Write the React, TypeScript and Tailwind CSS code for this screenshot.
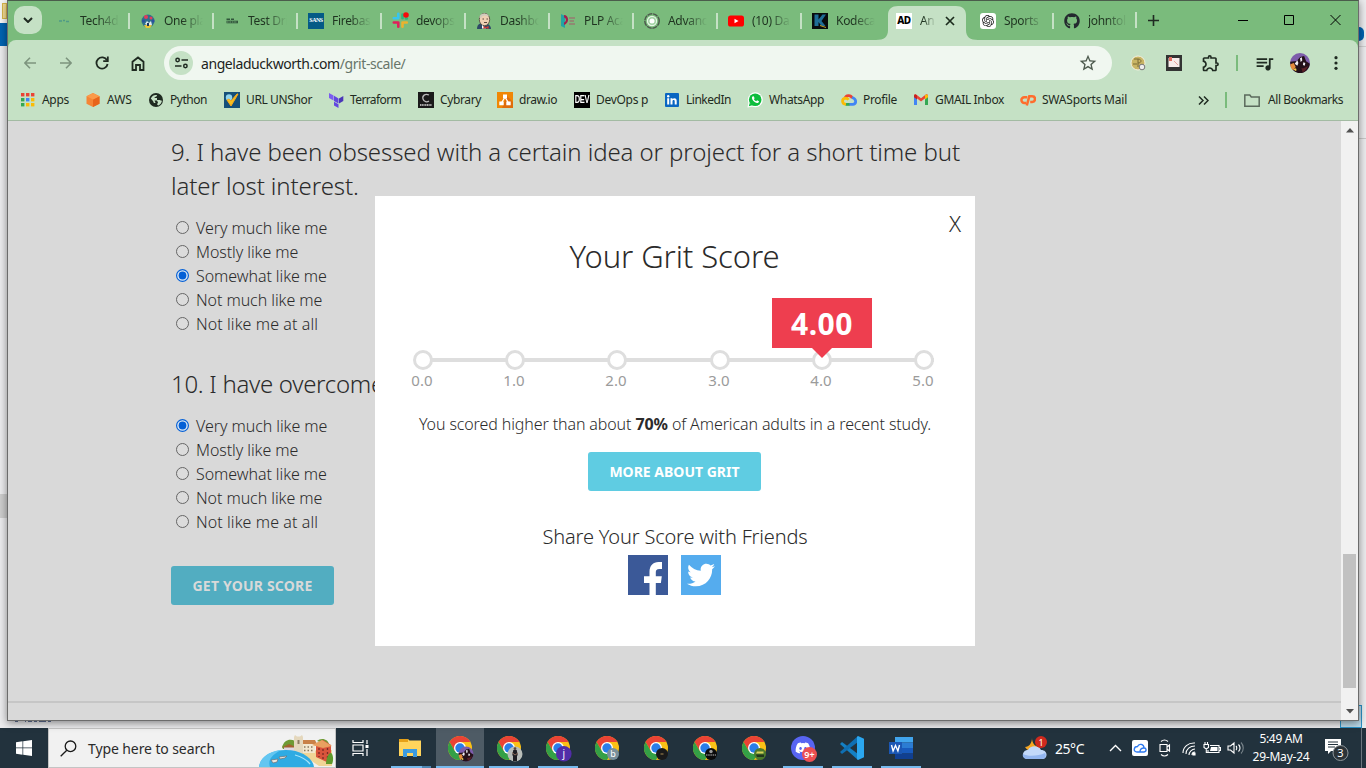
import type { ReactNode } from "react";
import { FaGithub, FaTwitter, FaDiscord } from "react-icons/fa";
import { SiOpenai } from "react-icons/si";
import { MdOutlineExtension, MdQueueMusic, MdStarBorder } from "react-icons/md";

/* ---------- favicons ---------- */

const Fav = {
  tech: (
    <svg width="16" height="16" viewBox="0 0 16 16"><path d="M3 8h3M7 7.500h2M10 8.500h3" stroke="#4f9a86" strokeWidth="1.300" /></svg>
  ),
  one: (
    <svg width="16" height="16" viewBox="0 0 16 16">
      <circle cx="8" cy="8" r="6.500" fill="#2f6f8c" />
      <circle cx="6" cy="4" r="2" fill="#e23b5a" /><circle cx="11" cy="5" r="1.500" fill="#e23b5a" />
      <circle cx="3.500" cy="8" r="1.500" fill="#2c4ea0" /><circle cx="13" cy="8" r="1.500" fill="#2c4ea0" />
      <path d="M5 11l2-3 2 2 2-2 1 4-3 1z" fill="#dfe9ef" /><path d="M4 12h8l-2 3H6z" fill="#e9c53a" /><path d="M7 10h2v3H7z" fill="#1c3560" />
    </svg>
  ),
  test: (
    <svg width="16" height="16" viewBox="0 0 16 16"><path d="M2.500 6.300h3.500M7 6.300h3" stroke="#30563a" strokeWidth="1.600" /><path d="M2.500 9h11.500" stroke="#30563a" strokeWidth="2.600" /><path d="M3 9h10" stroke="#8dc38f" strokeWidth=".7" strokeDasharray="1.600 .8" /></svg>
  ),
  sans: (
    <span className="flex size-4 items-center justify-center bg-[#045a86] font-['Liberation_Serif',serif] text-[6px] font-bold tracking-[-0.5px] text-white">SANS</span>
  ),
  slack: (
    <svg className="shrink-0" width="17" height="17" viewBox="0 0 17 17">
      <g strokeWidth="2.600" strokeLinecap="round">
        <path d="M6.300 1.800v4.500M1.800 6.300h4.500" stroke="#36c5f0" /><path d="M10.500 2.500v3.800" stroke="#2eb67d" /><path d="M14 6.500h.8" stroke="#2eb67d" />
        <path d="M10.500 10.500h4.300M10.500 10.500v4.300" stroke="#ecb22e" /><path d="M1.800 10.500h4.500M6.300 10.500v4.300" stroke="#e01e5a" />
      </g>
      <circle cx="14" cy="3" r="2.800" fill="#f60b0b" />
    </svg>
  ),
  jenkins: (
    <svg width="16" height="16" viewBox="0 0 16 16">
      <path d="M1 16c0-3 1-5 4-6l7 1c2 1 3 3 3 5z" fill="#2e4a66" />
      <ellipse cx="8.500" cy="6.500" rx="5.200" ry="6.200" fill="#efd0b4" stroke="#4c4339" strokeWidth=".8" />
      <path d="M3.500 5C3 0 11 -1 13 3l-1.500.5C9 2 7 2 5 5z" fill="#d0cbbd" />
      <path d="M6.500 6H8M10.500 6H12M8 9.500h3" stroke="#4c3a30" strokeWidth=".9" /><path d="M6 12l4 3.500h-4z" fill="#fff" /><path d="M7.500 13l2.500 1.200 2.500-1.500v3.300l-2.500-1-2.500 1z" fill="#d33833" />
    </svg>
  ),
  plp: (
    <svg width="16" height="16" viewBox="0 0 16 16">
      <path d="M1 1l4 2v12l-4-2z" fill="#22a4a4" /><path d="M4 2c5 0 6 8 0 10v-2.500c3-1 2-5 0-5z" fill="#a3204f" />
      <path d="M9 5h6M9.500 8h4.500M9 11h6" stroke="#a35a6a" strokeWidth="1.200" />
    </svg>
  ),
  adv: (
    <svg width="16" height="16" viewBox="0 0 16 16">
      <circle cx="8" cy="8" r="7.200" fill="none" stroke="#4d5a4d" strokeWidth="1.500" strokeDasharray="5 .8" />
      <circle cx="8" cy="8" r="4.600" fill="#9fd0a0" stroke="#e6f6e6" strokeWidth="1.200" /><circle cx="8" cy="8" r="2.500" fill="#fff" />
    </svg>
  ),
  yt: (
    <svg width="16" height="16" viewBox="0 0 16 16"><rect y="2.500" width="16" height="11" rx="2.600" fill="#f00" /><path d="M6.500 5.700v4.600l4-2.300z" fill="#fff" /></svg>
  ),
  kode: (
    <svg width="16" height="16" viewBox="0 0 16 16"><path d="M0 0h16v16H0z" fill="#080b0d" /><path d="M2.500 1.500h4v5l4-5H14L9.500 8l4 5H9.500l-3-4v4h-4z" fill="#1f6d96" /><path d="M8 12.500l6 2" stroke="#c59a22" /></svg>
  ),
  ad: <span className="flex size-4 items-center justify-center bg-white text-[10px] font-extrabold tracking-[-0.4px] text-black">AD</span>,
  gpt: <span className="flex size-4 items-center justify-center rounded-[3px] bg-white"><SiOpenai size={12} color="#222" /></span>,
  git: <FaGithub size={16} color="#24292f" />,
};

const tabs: { icon: ReactNode; text: string; sep: boolean; active?: boolean }[] = [
  { icon: Fav.tech, text: "Tech4d", sep: false },
  { icon: Fav.one, text: "One pla", sep: true },
  { icon: Fav.test, text: "Test Dri", sep: true },
  { icon: Fav.sans, text: "Firebas", sep: true },
  { icon: Fav.slack, text: "devops-", sep: true },
  { icon: Fav.jenkins, text: "Dashbo", sep: true },
  { icon: Fav.plp, text: "PLP Aca", sep: true },
  { icon: Fav.adv, text: "Advanc", sep: true },
  { icon: Fav.yt, text: "(10) Da", sep: true },
  { icon: Fav.kode, text: "Kodeca", sep: true },
  { icon: Fav.ad, text: "An", sep: false, active: true },
  { icon: Fav.gpt, text: "Sports", sep: false },
  { icon: Fav.git, text: "johntol", sep: true },
];

function Tab({ icon, text, sep, active }: (typeof tabs)[number]) {
  return (
    <div className="relative flex w-[84px] shrink-0 items-center">
      {active && (
        <svg className="absolute -left-2 -top-[1px] z-0" width="102" height="35" viewBox="0 0 102 35">
          <path d="M0 35c8 0 12-3 12-10V10C12 4 16 1 22 1h58c6 0 10 3 10 9v15c0 7 4 10 12 10z" fill="#c5e1c5" />
        </svg>
      )}
      <i className={`z-10 h-4 w-[2px] ${sep ? "bg-[#c5e1c5]" : ""}`} />
      <span className="z-10 ml-[10px] flex w-4 shrink-0 items-center justify-center">{icon}</span>
      <span className={`z-10 ml-2 whitespace-nowrap text-[12px] tracking-[-0.3px] text-[#1f3320] ${active ? "w-[16px] [mask-image:linear-gradient(to_right,#000_20%,transparent)]" : "w-[47px] [mask-image:linear-gradient(to_right,#000_18px,transparent_39px)]"}`}>{text}</span>
      {active && (
        <svg className="z-10 ml-[9px]" width="10" height="10" viewBox="0 0 10 10"><path d="M1 1l8 8M9 1L1 9" stroke="#1c2b1d" strokeWidth="1.700" /></svg>
      )}
    </div>
  );
}

/* ---------- bookmarks ---------- */

const appColors = ["#ea4335", "#ea4335", "#ea4335", "#34a853", "#4285f4", "#fbbc05", "#34a853", "#fbbc05", "#fbbc05"];

const Bm = {
  apps: (
    <svg width="16" height="16" viewBox="0 0 16 16">{appColors.map((c, i) => <rect key={i} x={1 + (i % 3) * 5} y={1 + Math.floor(i / 3) * 5} width="3.400" height="3.400" fill={c} />)}</svg>
  ),
  aws: (
    <svg width="16" height="16" viewBox="0 0 16 16"><path d="M8 1l6.500 3.200v7.600L8 15l-6.500-3.200V4.200z" fill="#f58536" /><path d="M8 7.500l6.500-3.300v7.600L8 15z" fill="#e8641b" /><path d="M8 1l6.500 3.200L8 7.500 1.500 4.200z" fill="#fb9a4a" /></svg>
  ),
  globe: (
    <svg width="16" height="16" viewBox="0 0 16 16"><circle cx="8" cy="8" r="7" fill="#1f2a21" /><path d="M2.800 6.500c1.500-3 4-4 6.200-3.300 0 2-2.500 1.300-2.500 2.800H9v2h3c1 1 2 .5 2 .5-.3 2-1.500 4-3.500 5-1.500-.5-1.500-2-2.500-2.500H6C5 10 5.500 9 4.500 8.500z" fill="#c5e1c5" /><path d="M6.500 8.500H9l1 2-1.500 3z" fill="#1f2a21" /></svg>
  ),
  url: (
    <svg width="16" height="16" viewBox="0 0 16 16"><path d="M0 0h16v16H0z" fill="#15507a" /><circle cx="5" cy="5.500" r="3.200" fill="#8fd4ee" /><path d="M3 8l4 6 7-12-1 0-6 7-2-2z" fill="#f5c021" stroke="#f5a81c" /></svg>
  ),
  terra: (
    <svg width="16" height="16" viewBox="0 0 16 16"><path d="M1 1l4.500 2.600v5L1 6z" fill="#7b5cf0" /><path d="M6 3.800l4.500 2.600v5L6 8.900zM6 9.800l4.500 2.500V16L6 13.500z" fill="#6247e0" /><path d="M11 6.400l4.300-2.500v5L11 11.400z" fill="#4a35b8" /></svg>
  ),
  cyb: (
    <svg width="16" height="16" viewBox="0 0 16 16"><path d="M0 0h16v16H0z" fill="#1a1a1a" /><path d="M11 3C7 1 4 4 5 7s4 3.500 6 2" fill="none" stroke="#bbb" strokeWidth="1.300" /><path d="M2 13h12" stroke="#ddd" strokeWidth="1.500" strokeDasharray="1.200 .5" /></svg>
  ),
  draw: (
    <svg width="16" height="16" viewBox="0 0 16 16"><path d="M0 0h16v16H0z" fill="#f08705" /><path d="M10 4l6 6v6H5z" fill="#df6c0c" /><path d="M8 5l-3.500 6M8 5l3.500 6" stroke="#fff" strokeWidth="1.300" /><path d="M6 2.500h4v3.800H6zM2.300 9.500h4.400v3.800H2.300zM9.300 9.500h4.400v3.800H9.300z" fill="#fff" /></svg>
  ),
  dev: <span className="flex size-4 items-center justify-center bg-black"><span className="scale-y-150 font-['Liberation_Sans',sans-serif] text-[7.500px] font-bold tracking-[-0.3px] text-white">DEV</span></span>,
  li: (
    <svg width="16" height="16" viewBox="0 0 16 16"><rect x="1" y="1" width="14" height="14" rx="1" fill="#0a66c2" /><path d="M3.200 6.300h2v6.200h-2zM6.500 6.300h2v1c1-1.700 4.200-1.500 4.200 1.500v3.700h-2V9.300c0-1.800-2.200-1.700-2.200 0v3.200h-2z" fill="#fff" /><circle cx="4.200" cy="4.200" r="1.200" fill="#fff" /></svg>
  ),
  wa: (
    <svg width="16" height="16" viewBox="0 0 16 16"><circle cx="8.300" cy="7.700" r="7.500" fill="#fff" /><path d="M.5 15.500l1-5 4 4z" fill="#fff" /><circle cx="8.200" cy="7.800" r="6.300" fill="#0dbd3c" /><path d="M1.800 14.200l1-3.500 2.500 2.500z" fill="#0dbd3c" /><path d="M5.500 4.500l1.200-.3.900 2-.7 1c.6 1 1.300 1.600 2.300 2l.9-.9 1.900.9c0 1.500-1.200 1.900-2.200 1.700C7.300 10.400 5 8 4.900 6c0-.7.300-1.200.6-1.500z" fill="#fff" /></svg>
  ),
  cloud: (
    <svg width="16" height="16" viewBox="0 0 16 16" fill="none" strokeWidth="2.800"><path d="M4 6.500C5 3 9.500 2.500 11.300 6" stroke="#ea4335" /><path d="M11 5.500c5 1.500 4.500 6.700.8 6.900H8" stroke="#4285f4" /><path d="M8.500 12.400H4.400" stroke="#34a853" /><path d="M5 12.300c-4.500-.3-4.500-5.800-.5-6.100 1.500 0 2.500.8 3 1.600" stroke="#fbbc05" /></svg>
  ),
  gmail: (
    <svg width="16" height="16" viewBox="0 0 16 16"><path d="M1 4v9h3V6z" fill="#4285f4" /><path d="M12 6v7h3V4z" fill="#34a853" /><path d="M1 4c0-2 1.500-2 2.500-1.300L8 6.200l4.500-3.500C13.500 2 15 2 15 4l-7 5.600z" fill="#ea4335" /><path d="M12 3c1.500-1.200 3-.5 3 1v1.200L12 7.500z" fill="#fbbc05" /><path d="M1 4c0-1.200.8-1.700 1.500-1.600L4 3.500v4L1 5.200z" fill="#c5221f" /></svg>
  ),
  cp: (
    <svg width="16" height="16" viewBox="0 0 16 16" fill="none" stroke="#ff6c2c" strokeWidth="2.500"><path d="M7.300 5.200H4.300a2.900 2.900 0 0 0 0 5.800h1.900" /><path d="M6.800 13.500L9.300 4.300h2.900a2.800 2.800 0 0 1 0 5.600h-2" /></svg>
  ),
};

const bookmarks: [ReactNode, string, string, string][] = [
  [Bm.apps, "Apps", "w-[65px]", "tracking-[-0.3px]"],
  [Bm.aws, "AWS", "w-[63px]", ""],
  [Bm.globe, "Python", "w-[76px]", "tracking-[-0.47px]"],
  [Bm.url, "URL UNShor", "w-[104px]", "tracking-[-0.38px]"],
  [Bm.terra, "Terraform", "w-[90px]", "tracking-[-0.6px]"],
  [Bm.cyb, "Cybrary", "w-[79px]", "tracking-[-0.37px]"],
  [Bm.draw, "draw.io", "w-[77px]", "tracking-[-0.48px]"],
  [Bm.dev, "DevOps p", "w-[90px]", "tracking-[-0.3px]"],
  [Bm.li, "LinkedIn", "w-[83px]", "tracking-[-0.48px]"],
  [Bm.wa, "WhatsApp", "w-[94px]", "tracking-[-0.35px]"],
  [Bm.cloud, "Profile", "w-[72px]", "tracking-[-0.33px]"],
  [Bm.gmail, "GMAIL Inbox", "w-[107px]", "tracking-[-0.36px]"],
  [Bm.cp, "SWASports Mail", "w-[120px]", "tracking-[-0.22px]"],
];

/* ---------- page ---------- */

const answers = ["Very much like me", "Mostly like me", "Somewhat like me", "Not much like me", "Not like me at all"];

function Options({ selected }: { selected: number }) {
  return (
    <div className="flex flex-col">
      {answers.map((a, i) => (
        <div key={a} className="flex h-6 items-center pl-[5px]">
          <svg className="mr-[7px] -mt-[2px]" width="13" height="13" viewBox="0 0 13 13">
            {i === selected ? (
              <><circle cx="6.500" cy="6.500" r="5.900" fill="#e4ecf4" stroke="#0560d6" strokeWidth="1.200" /><circle cx="6.500" cy="6.500" r="3.900" fill="#0560d6" /></>
            ) : (
              <circle cx="6.500" cy="6.500" r="6" fill="#dcdcdc" stroke="#666" />
            )}
          </svg>
          <span className={`text-[16px] font-light text-[#2b2b2b] ${i === 4 ? "tracking-[0.08px]" : "tracking-[-0.07px]"}`}>{a}</span>
        </div>
      ))}
    </div>
  );
}

const ticks = ["0.0", "1.0", "2.0", "3.0", "4.0", "5.0"];
const tickGap = ["", "ml-[72px]", "ml-[82px]", "ml-[83px]", "ml-[82px]", "ml-[82px]"];
const labelGap = ["", "ml-[52px]", "ml-[62px]", "ml-[63px]", "ml-[62px]", "ml-[62px]"];

function Modal() {
  return (
    <div className="absolute left-[367px] top-[75px] flex h-[450px] w-[600px] flex-col items-center bg-white text-[#2b2b2b]">
      <span className="absolute right-[14px] top-[11px] text-[22px] font-light leading-[32px]">X</span>
      <h2 className="mt-[40px] pr-[1px] text-[31px] font-light leading-[40px] tracking-[-0.08px]">Your Grit Score</h2>
      <div className="relative mt-[73px] flex h-[22px] w-full items-center pl-[38px]">
        <div className="absolute left-[48px] top-[9px] h-[4px] w-[511px] bg-[#dedede]" />
        {ticks.map((t, i) => (
          <i key={t} className={`relative size-5 rounded-full border-[3px] border-[#dedede] bg-white ${tickGap[i]}`} />
        ))}
        <div className="absolute left-[397px] top-[-51px] flex flex-col items-center">
          <div className="flex h-[50px] w-[100px] items-center justify-center bg-[#ee3e4f] text-[30px] font-bold tracking-[0.5px] text-white">4.00</div>
          <svg width="20" height="10" viewBox="0 0 20 10"><path d="M0 0h20L10 10z" fill="#ee3e4f" /></svg>
        </div>
      </div>
      <div className="-mt-[1px] flex w-full pl-[27px] text-[15px] leading-[20px] tracking-[0.1px] text-[#9b9b9b]">
        {ticks.map((t, i) => <span key={t} className={`w-10 text-center ${labelGap[i]}`}>{t}</span>)}
      </div>
      <p className="mt-[22px] text-[16px] font-light leading-[24px] tracking-[-0.11px]">You scored higher than about <b className="font-bold">70%</b> of American adults in a recent study.</p>
      <div className="mr-[1px] mt-[16px] flex h-[39px] w-[173px] shrink-0 items-center justify-center rounded-[3px] bg-[#5fcce2] text-[14px] font-bold text-white">MORE ABOUT GRIT</div>
      <p className="mt-[33px] text-[20px] font-light leading-[26px] tracking-[-0.18px]">Share Your Score with Friends</p>
      <div className="mr-[1px] mt-[5px] flex gap-[13px]">
        <svg width="40" height="40" viewBox="0 0 40 40"><path d="M0 0h40v40H0z" fill="#3b5998" /><path d="M21.500 40V28h-5.500v-6.700h5.500v-4.500c0-6 3.500-9.800 9-9.800H34v7h-2.500c-3 0-3.700 1.300-3.700 3.600v3.700h6l-.9 6.700h-5.100v12z" fill="#fff" /></svg>
        <div className="flex size-10 items-center justify-center bg-[#55acee]"><FaTwitter size={28} color="#fff" /></div>
      </div>
    </div>
  );
}

/* ---------- taskbar ---------- */

function Chrome({ badge }: { badge: ReactNode }) {
  return (
    <svg width="26" height="26" viewBox="0 0 26 26">
      <circle cx="12" cy="12" r="12" fill="#fbc116" />
      <path d="M1.600 6A12 12 0 0 1 22.400 6H12L6.800 15z" fill="#ea4335" />
      <path d="M1.600 6A12 12 0 0 0 12 24l5.200-9L6.800 15z" fill="#34a046" />
      <circle cx="12" cy="12" r="6" fill="#fff" /><circle cx="12" cy="12" r="4.700" fill="#2a7de9" />
      {badge}
    </svg>
  );
}

const avatar = (
  <>
    <circle cx="18" cy="18" r="7.500" fill="#7d5cab" />
    <path d="M10.600 17l5-.500 2.500-3 3-.800 1.500 4 2.800 1.800c-.5 4-3.500 7-7.400 7s-7-3-7.400-8.500z" fill="#241019" />
    <path d="M10.700 19l2.600-1 1.500 3-2 2.500c-1.200-1-2-2.500-2.100-4.500z" fill="#e58a3c" />
    <path d="M14 18.500l2-2.500.8 2-.8 2zM18 14.500l1.400-.800.3 2.500-1.200 1zM20.500 17.500l1.500.5-.5 2-1.300-.5z" fill="#f1eef5" />
    <path d="M13 22.500l2-.500.5 1.500-1 .5z" fill="#f4d04c" /><path d="M19 22c2 0 4-1 5-2-.5 2-2 4-4 5z" fill="#5a1f26" />
  </>
);

const chromes: [ReactNode, string][] = [
  [avatar, "active"],
  [<><circle cx="18" cy="18" r="7.500" fill="#b9beb9" /><path d="M16.300 14h3.400l1 5-.7 1v5.200h-4V20l-.7-1z" fill="#1f1f22" /><path d="M15 16.500l3 2.500 3-2" stroke="#8a6b58" fill="none" /><circle cx="18" cy="12.700" r="1.400" fill="#5b4a42" /></>, "open"],
  [<><circle cx="17.800" cy="17.800" r="7.800" fill="#512da8" /><text x="17.800" y="21" textAnchor="middle" fontSize="10" fill="#fff">j</text></>, "open"],
  [<><circle cx="18" cy="18" r="6" fill="#78909c" /><text x="18" y="21.300" textAnchor="middle" fontSize="9" fill="#fff">b</text></>, ""],
  [<><circle cx="18" cy="18" r="6" fill="#1a1a1a" /><path d="M16.500 18h3" stroke="#a88a50" /></>, ""],
  [<><circle cx="18" cy="18" r="6" fill="#0a0a0a" /><circle cx="18" cy="15.500" r="1.700" fill="#999" /><path d="M13 19h10" stroke="#bbb" strokeDasharray="1.500 .7" /></>, ""],
  [<><circle cx="18" cy="18" r="6" fill="#4b7a2b" /><path d="M15 15.500h6.500v2H14z" fill="#d8d05a" /><path d="M14 18.500h8v2.500h-7z" fill="#23351c" /></>, ""],
];

function Task({ children, open, active }: { children: ReactNode; open?: boolean; active?: boolean }) {
  return (
    <div className={`relative mr-px flex h-10 w-12 shrink-0 items-center justify-center ${active ? "bg-[#4e5b65]" : ""}`}>
      {children}
      {open && <i className={`absolute bottom-0 h-[2px] bg-[#76b9ed] ${active ? "w-12" : "w-10"}`} />}
    </div>
  );
}

function Taskbar() {
  return (
    <div className="flex h-10 items-center bg-[#22323d] text-white">
      <div className="flex w-12 items-center justify-center">
        <svg width="16" height="16" viewBox="0 0 16 16" fill="#fff"><path d="M0 2.200l6.500-.9v6.300H0zM7.200 1.200L16 0v7.600H7.200zM0 8.300h6.500v6.400L0 13.800zM7.200 8.300H16V16l-8.800-1.200z" /></svg>
      </div>
      <div className="flex h-10 w-[288px] items-center border border-[#c4c4c4] bg-[#f1f1f1] pl-[11px]">
        <svg width="17" height="17" viewBox="0 0 17 17" fill="none" stroke="#1a1a1a" strokeWidth="1.300"><circle cx="10.500" cy="6.300" r="5.300" /><path d="M6.800 10.200L.7 16.300" /></svg>
        <span className="ml-[11px] flex-1 text-[14px] tracking-[-0.1px] text-[#2b2b2b]">Type here to search</span>
        <svg className="mt-[6px]" width="76" height="32" viewBox="0 0 76 32">
          <path d="M23 12c2-7 8-9 13-6l6 8H24zM58 6c4-4 12-2 12 4z" fill="#6f9a34" />
          <path d="M25 12h12v5H25z" fill="#ddd6e2" /><path d="M23 12.500l7-3.500 8 3.500z" fill="#a3622e" />
          <path d="M40 16l33-1v16H60L44 20z" fill="#f0d596" />
          <path d="M42 8h14v10H42z" fill="#f2e7cf" /><path d="M40 9l4-4h12l2 4z" fill="#c98148" />
          <path d="M35 2l1-2 2 1.500h3L43 0l1 2v16h-9z" fill="#e4d7bc" /><path d="M38.500 5h2v4h-2z" fill="#8d7c62" />
          <path d="M57 9l7-4 8 5v19l-15-7z" fill="#d8543c" /><path d="M53 10l10-5 10 6-9 2z" fill="#e9a060" />
          <path d="M60 13v9M64 14v10M68.500 13v12" stroke="#7a2c24" strokeWidth="1.300" strokeDasharray="2 2" /><path d="M45 12h10M45 15.500h10" stroke="#8a7a60" strokeWidth="1.300" strokeDasharray="1.500 2" />
          <path d="M67 29c0-6 3-12 5-11s3 7 1 11z" fill="#5f9a2c" />
          <path d="M0 32c1-10 12-17 27-17s27 8 28 17z" fill="#2fabe3" /><path d="M0 32c1-10 11-16 22-17-11 6-13 11-11 17z" fill="#63c6f1" />
          <path d="M36 20c7 2 12 5 15 9" stroke="#a9e5fa" strokeWidth="1.300" fill="none" />
          <path d="M12 25l7-1-1 3-4 1zM20 22l8-1-2 2-5 1z" fill="#ece6dc" stroke="#6a6f75" strokeWidth=".7" />
        </svg>
      </div>
      <div className="ml-[1px] flex w-[47px] items-center justify-center">
        <svg width="17" height="16" viewBox="0 0 17 16" fill="none" stroke="#fff" strokeWidth="1.200"><path d="M1 0v2.500h10V0M1 16v-2.500h10V16M1 5h10v6H1zM15 0v4M15 9v7" /><path d="M13.500 5h3v3h-3z" fill="#fff" stroke="none" /></svg>
      </div>
      <div className="relative flex h-10 w-[52px] items-center justify-center">
        <svg width="22" height="18" viewBox="0 0 22 18"><path d="M0 0h9l1.500 1.500H22V17H0z" fill="#ffd45c" /><path d="M0 0h9v3H0z" fill="#e6a117" /><path d="M4 18v-8h14v8h-4v-4H8v4z" fill="#3b9be0" /></svg>
        <i className="absolute bottom-0 left-[7px] flex h-[2px] w-10 bg-[#76b9ed]"><i className="ml-auto w-[9px] bg-[#4e86b2]" /></i>
      </div>
      {chromes.map(([badge, state], i) => (
        <Task key={i} open={state !== ""} active={state === "active"}><span className="pl-[2px] pt-[2px]"><Chrome badge={badge} /></span></Task>
      ))}
      <Task open>
        <span className="relative flex size-6 items-center justify-center rounded-full bg-[#5865f2]"><FaDiscord size={16} color="#fff" />
          <span className="absolute -bottom-[2px] -right-[2px] flex size-[15px] items-center justify-center rounded-full bg-[#ed4f52] text-[9px] font-semibold">9+</span></span>
      </Task>
      <Task open>
        <svg width="24" height="24" viewBox="0 0 24 24"><path d="M0 8l2-2 16 12v6z" fill="#1480c4" /><path d="M0 16l2 2L18 6V0z" fill="#0f6fb3" /><path d="M18 0l6 2.800v18.400L18 24l-1-1V1z" fill="#2ba7f0" /></svg>
      </Task>
      <Task open>
        <svg width="24" height="22" viewBox="0 0 24 22"><path d="M6 0h18v5.500H6z" fill="#41a5ee" /><path d="M6 5.500h18V11H6z" fill="#2b7cd3" /><path d="M6 11h18v5.500H6z" fill="#185abd" /><path d="M6 16.500h18V22H6z" fill="#103f91" /><path d="M0 5h13v12H0z" fill="#1b57b4" /><path d="M2.500 8l1.600 6L6.500 8.500 8.900 14l1.600-6" fill="none" stroke="#fff" strokeWidth="1.400" /></svg>
      </Task>
      <div className="ml-[96px] flex flex-1 items-center">
        <svg width="27" height="26" viewBox="0 0 27 26"><path d="M10 3c0 5 3 9 8 9-2 5-12 6-15 0 4 0 7-4 7-9z" fill="#f5a623" /><path d="M5 24c-6-1-5-9 1-9 2-5 11-5 13 0 7 0 7 8 2 9z" fill="#c3d9fa" /><path d="M5 24c-3 0-5-3-4-5 5 3 16 2 22-1 2 3 0 6-3 6z" fill="#93b6f0" /><circle cx="19" cy="7" r="6" fill="#cf2a1e" /><text x="19" y="10.500" textAnchor="middle" fontSize="9" fill="#fff">1</text></svg>
        <span className="ml-[6px] w-[54px] text-[14px] tracking-[-0.45px]">25°C</span>
        <svg width="13" height="8" viewBox="0 0 13 8" fill="none" stroke="#fff" strokeWidth="1.400"><path d="M1 7l5.500-5.500L12 7" /></svg>
        <svg className="ml-[10px]" width="16" height="16" viewBox="0 0 16 16"><rect width="16" height="16" rx="2" fill="#fff" /><path d="M5 12h7c3-.5 2.500-4 0-4C12 4 7 3 5.500 6.500 1.500 6.500 1 12 5 12zM8 12c0-3 2-4 4-4" fill="none" stroke="#2f7af0" strokeWidth="1.400" /></svg>
        <svg className="ml-[10px]" width="14" height="18" viewBox="0 0 14 18" fill="none" stroke="#fff" strokeWidth="1.100"><path d="M2 5.500h7v7H2zM9 8l2.500-2v6L9 10M3 2.500c2-1.700 5-1.700 7 0M3 15.500c2 1.700 5 1.700 7 0" /></svg>
        <svg className="ml-[10px]" width="15" height="15" viewBox="0 0 15 15" fill="none" stroke="#fff" strokeWidth="1.100"><path d="M1 12C1 6 6 1.500 13 2M4 13c0-5 4-8 9-8M7 14c0-3 3-6 6-6M10 14c0-2 1-3 3-3" /><path d="M11 12h2v2h-2z" fill="#fff" /></svg>
        <svg className="ml-[6px]" width="18" height="13" viewBox="0 0 18 13" fill="none" stroke="#fff" strokeWidth="1.100"><path d="M7 3.500h9v7H5V8M16 5.500h1.500v3H16M1 2.500h4.500v3L3.300 7 1 5.500zM2 2.500V0M4.500 2.500V0M3.300 7v3.500H5" /><path d="M8 5h6.500v4H7z" fill="#fff" stroke="none" /></svg>
        <svg className="ml-[6px]" width="18" height="14" viewBox="0 0 18 14" fill="none" stroke="#fff" strokeWidth="1.100"><path d="M1 5h2.500L7 2v10L3.500 9H1zM9 5c1 1 1 3 0 4M11.500 3.500c2 2 2 5 0 7" /><path d="M14 1.500c3 3 3 8 0 11" stroke="#78838a" /></svg>
        <div className="ml-[5px] flex w-[62px] flex-col items-center whitespace-nowrap text-[12px] leading-[18px]"><span className="tracking-[-0.35px]">5:49 AM</span><span className="tracking-[-0.21px]">29-May-24</span></div>
        <svg className="ml-[13px]" width="26" height="26" viewBox="0 0 26 26"><path d="M0 4h16v12H6l-3 3v-3H0z" fill="#fff" /><path d="M3 7h10M3 9.500h10M3 12h7" stroke="#22323d" /><circle cx="15.500" cy="18" r="7.500" fill="#2c3338" stroke="#8f979c" /><text x="15.500" y="22" textAnchor="middle" fontSize="11" fill="#fff">3</text></svg>
      </div>
      <i className="mr-1 h-10 w-px bg-[#6b767e]" />
    </div>
  );
}

const nav = "#1f2a21";

export default function App() {
  return (
    <div className="relative flex h-[768px] w-[1366px] flex-col overflow-hidden bg-[#ececee] font-['Noto_Sans','Liberation_Sans',sans-serif]">
      <div className="relative flex h-[728px]">
        <div className="w-[7px]">
          <div className="h-[23px] bg-[#f6f6f6] pl-[2px] pt-[3px]"><div className="h-4 border border-[#d8b74c] bg-[#f6dd92]" /></div>
          <div className="h-[23px] bg-[#0063b1]" />
          <div className="mt-[448px] h-6 bg-[#cdcdcd]" />
        </div>
        <div className="z-10 flex h-[721px] w-[1352px] flex-col border border-[#6c6c6c] border-t-[#4a5c4b] bg-[#7abb7c] shadow-[0_2px_8px_rgba(0,0,0,0.45)]">
          <div className="flex h-[39px] shrink-0 pl-[6px]">
            <div className="mt-[5px] flex size-7 items-center justify-center rounded-[10px] bg-[#c5e1c5]"><svg width="10" height="6" viewBox="0 0 10 6" fill="none" stroke={nav} strokeWidth="2"><path d="M1 1l4 4 4-4" /></svg></div>
            <div className="ml-[2px] mt-[5px] flex h-[29px]">{tabs.map((t) => <Tab key={t.text} {...t} />)}</div>
            <i className="mt-[11px] ml-[-1px] h-4 w-[2px] bg-[#c5e1c5]" />
            <svg className="ml-[11px] mt-[14px]" width="11" height="11" viewBox="0 0 11 11" stroke={nav} strokeWidth="1.600"><path d="M5.500 0v11M0 5.500h11" /></svg>
            <div className="mt-[14px] flex gap-[36px] pl-[79px]">
              <svg width="10" height="10" viewBox="0 0 10 10" stroke="#000"><path d="M0 5.500h10" /></svg>
              <svg width="10" height="10" viewBox="0 0 10 10" stroke="#000" fill="none"><path d="M.5.500h9v9h-9z" /></svg>
              <svg width="11" height="10" viewBox="0 0 11 10" stroke="#000"><path d="M.5 0l10 10M10.500 0l-10 10" /></svg>
            </div>
          </div>
          <div className="flex h-10 shrink-0 items-center rounded-t-[8px] bg-[#c5e1c5] pt-[6px]">
            <div className="flex w-[156px] items-center pl-[16px]">
              <svg width="12" height="12" viewBox="0 0 12 12" fill="none" stroke="#7d947e" strokeWidth="1.600"><path d="M12 6H1M6 .8L.9 6 6 11.200" /></svg>
              <svg className="ml-[24px]" width="12" height="12" viewBox="0 0 12 12" fill="none" stroke="#7d947e" strokeWidth="1.600"><path d="M0 6h11M6 .8L11.100 6 6 11.200" /></svg>
              <svg className="ml-[23px]" width="14" height="14" viewBox="0 0 14 14" fill="none" stroke={nav} strokeWidth="1.800"><path d="M12 4.300A5.600 5.600 0 1 0 12.600 8" /><path d="M12.800.5v4.700H8.200" /></svg>
              <svg className="ml-[22px]" width="14" height="15" viewBox="0 0 14 15" fill="none" stroke={nav} strokeWidth="1.800"><path d="M1.500 5.800L7 1.500l5.500 4.300V14H9V9H5v5H1.500z" /></svg>
            </div>
            <div className="flex h-[34px] w-[948px] items-center rounded-full bg-[#f0f7f0] pl-[5px] pr-[14px]">
              <span className="flex size-6 items-center justify-center rounded-full bg-[#c5e1c5]"><svg width="13" height="12" viewBox="0 0 13 12" fill="none" stroke={nav} strokeWidth="1.500"><circle cx="2.600" cy="3" r="1.700" /><path d="M6.500 3H13M0 9h6.500" /><circle cx="10.400" cy="9" r="1.700" /></svg></span>
              <span className="ml-2 flex-1 text-[14px] tracking-[-0.43px] text-[#1c241d]">angeladuckworth.com<span className="text-[#68756a]">/grit-scale/</span></span>
              <MdStarBorder size={20} color="#4d5a4e" />
            </div>
            <div className="flex flex-1 items-center pl-[18px]">
              <svg width="16" height="16" viewBox="0 0 16 16"><circle cx="8" cy="8" r="7" fill="#c9b565" stroke="#f4f0df" /><path d="M4 4h4v8M8 4c4 0 4 4 0 4M3 9h4" fill="none" stroke="#7a6a35" /><circle cx="12" cy="12" r="2.800" fill="#eee" stroke="#777" /></svg>
              <svg className="ml-5" width="16" height="16" viewBox="0 0 16 16"><path d="M0 0h16v16H0z" fill="#333" /><path d="M2.500 3h11v9h-11z" fill="#f8eceb" /><path d="M3 2h3v4H3z" fill="#e26d62" /><path d="M8 6l4 4" stroke="#e9a39c" /></svg>
              <MdOutlineExtension className="ml-[19px]" size={20} color={nav} />
              <i className="ml-[15px] h-4 w-[2px] bg-[#7abb7c]" />
              <MdQueueMusic className="ml-[16px]" size={21} color={nav} />
              <svg className="ml-[15px]" width="20" height="20" viewBox="10.500 10.500 15 15">{avatar}</svg>
              <svg className="ml-[24px]" width="4" height="14" viewBox="0 0 4 14" fill={nav}><circle cx="2" cy="1.700" r="1.600" /><circle cx="2" cy="7" r="1.600" /><circle cx="2" cy="12.300" r="1.600" /></svg>
            </div>
          </div>
          <div className="flex h-[41px] shrink-0 items-center border-b border-[#a3bba3] bg-[#c5e1c5] pl-3 text-[12px] text-[#1f2a21]">
            {bookmarks.map(([icon, label, w, tracking]) => (
              <div key={label} className={`flex shrink-0 items-center gap-[6px] whitespace-nowrap ${w}`}><span className="flex w-4 shrink-0 justify-center">{icon}</span><span className={tracking}>{label}</span></div>
            ))}
            <svg className="ml-[58px]" width="11" height="9" viewBox="0 0 11 9" fill="none" stroke={nav} strokeWidth="1.500"><path d="M1 .5l4 4-4 4M6 .5l4 4-4 4" /></svg>
            <i className="ml-[16px] h-4 w-[2px] bg-[#7abb7c]" />
            <svg className="ml-[17px] mr-2 shrink-0" width="16" height="13" viewBox="0 0 16 13" fill="none" stroke="#5b6a5c" strokeWidth="1.500"><path d="M.8 1h5l1.500 2h7.900v9.200H.8z" /></svg>
            <span className="whitespace-nowrap tracking-[-0.44px]">All Bookmarks</span>
          </div>
          <div className="relative flex min-h-0 flex-1 bg-[#d9d9d9]">
            <div className="flex w-[1333px] flex-col pl-[163px] text-[#2b2b2b]">
              <h3 className="mt-[14px] whitespace-nowrap text-[24px] font-light leading-[34px] tracking-[-0.1px]">9. I have been obsessed with a certain idea or project for a short time but<br />later lost interest.</h3>
              <div className="mt-[13px]"><Options selected={2} /></div>
              <h3 className="mt-[31px] whitespace-nowrap text-[24px] font-light leading-[34px] tracking-[-0.3px]">10. I have overcome</h3>
              <div className="mt-[13px]"><Options selected={0} /></div>
              <div className="mt-[32px] flex h-[39px] w-[163px] items-center justify-center rounded-[3px] bg-[#52adc1] text-[14px] font-bold tracking-[0.2px] text-[#d9d9d9]">GET YOUR SCORE</div>
              <div className="ml-[-163px] mt-[96px] h-[2px] bg-[#c6c6c6]" />
            </div>
            <div className="flex w-[17px] flex-col items-center bg-[#f1f1f1]">
              <svg className="mt-[7px]" width="8" height="5" viewBox="0 0 8 5"><path d="M4 0l4 4.500H0z" fill="#505050" /></svg>
              <div className="mt-[421px] h-[134px] w-[13px] bg-[#c1c1c1]" />
              <svg className="mt-[21px]" width="8" height="5" viewBox="0 0 8 5"><path d="M4 4.500L0 0h8z" fill="#505050" /></svg>
            </div>
            <Modal />
          </div>
        </div>
        <div className="flex-1">
          <div className="mt-[27px] h-[14px] w-[5px] rounded-r-full bg-[#0063b1]" />
          <div className="mt-[5px] h-px bg-[#d0d0d0]" />
          <div className="mt-[91px] h-px bg-[#c8c8c8]" />
        </div>
        <svg className="absolute bottom-[5px] left-[14px] z-20" width="38" height="2" viewBox="0 0 38 2"><path d="M1 .5h3M11 .5h1M14 .5h4M20 .5h3M25 .5h7M34 .5h3" stroke="#44506a" /></svg>
        <div className="absolute bottom-0 left-[1340px] h-[23px] w-[22px] border border-[#2b93c9] bg-[#bcd9e8]" />
      </div>
      <Taskbar />
    </div>
  );
}
